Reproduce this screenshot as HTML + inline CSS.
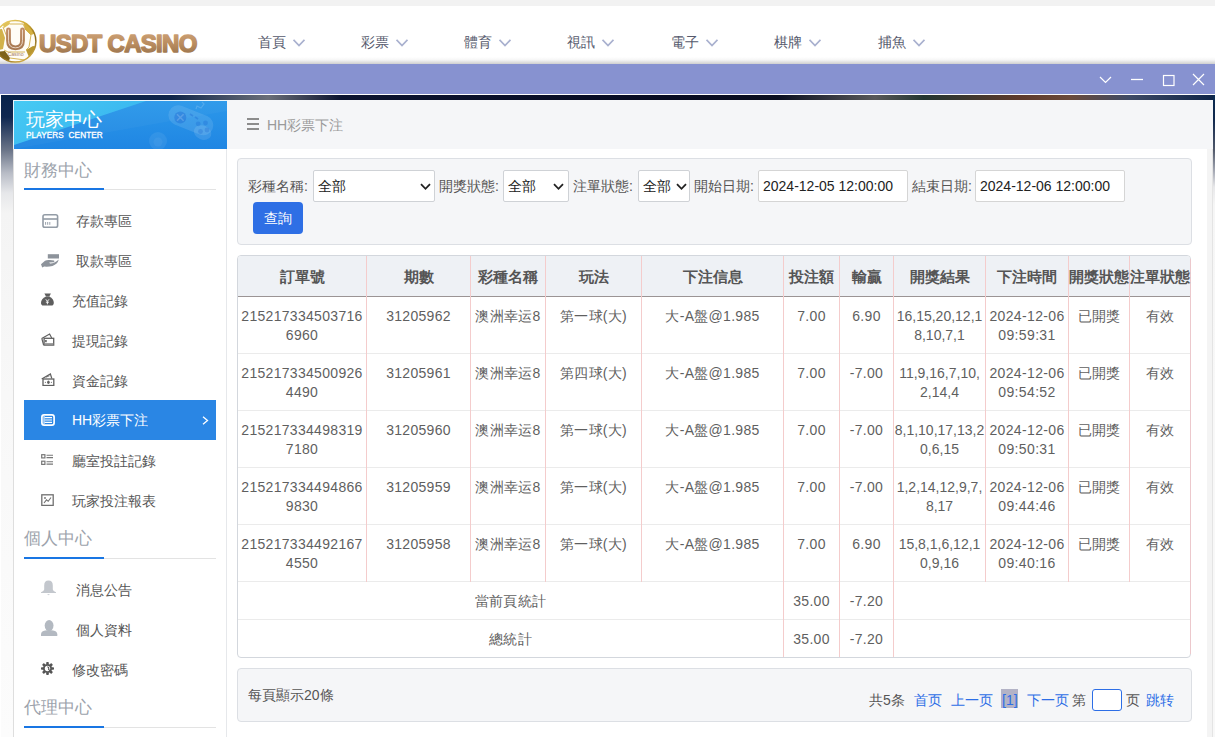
<!DOCTYPE html><html><head><meta charset="utf-8"><title>HH彩票下注</title><style>
*{margin:0;padding:0;box-sizing:border-box}
html,body{width:1215px;height:737px;overflow:hidden;background:#fff;font-family:"Liberation Sans",sans-serif;}
.a{position:absolute}
.nav{position:absolute;top:33px;font-size:14px;line-height:18px;color:#565a6d;white-space:nowrap}
.nav i{display:inline-block;position:absolute;top:5px;width:12px;height:8px}
.st{position:absolute;left:24px;font-size:17px;line-height:20px;color:#9ca3ac;white-space:nowrap}
.ul{position:absolute;left:24px;width:192px;height:1px;background:#e3e3e3}
.ub{position:absolute;left:24px;width:80px;height:2px;background:#1976e3}
.it{position:absolute;font-size:14px;line-height:18px;color:#555;white-space:nowrap}
.ic{position:absolute}
.lbl{position:absolute;top:177px;font-size:14px;line-height:18px;color:#555;white-space:nowrap}
.sel{position:absolute;top:170px;height:32px;background:#fff;border:1px solid #cfd2d6;border-radius:2px;font-size:14px;line-height:18px;color:#222;padding:6px 0 0 4px;white-space:nowrap}
.sel svg{position:absolute;top:12px}
.td{position:absolute;text-align:center;font-size:14px;line-height:19px;color:#5f5f5f;white-space:nowrap;letter-spacing:0.3px}
.th{position:absolute;text-align:center;font-size:15px;line-height:18px;color:#555;font-weight:bold;white-space:nowrap}
.vl{position:absolute;width:1px;background:#f4cccc}
.hl{position:absolute;height:1px;background:#ebebeb}
.pg{position:absolute;top:691px;font-size:14px;line-height:18px;white-space:nowrap}
.bl{color:#2d6ee6}
</style></head><body>
<div class="a" style="left:0;top:0;width:1215px;height:6px;background:#f2f2f2"></div>
<div class="a" style="left:0;top:57px;width:1215px;height:7px;background:linear-gradient(#fff,#f6f6f6 40%,#cfcfcf)"></div>
<svg class="a" style="left:0;top:0" width="205" height="66" viewBox="0 0 205 66">
<defs>
<linearGradient id="gold" x1="0" y1="0" x2="0.6" y2="1"><stop offset="0" stop-color="#f0d878"/><stop offset=".4" stop-color="#cfa935"/><stop offset=".75" stop-color="#8a6a1a"/><stop offset="1" stop-color="#c9a440"/></linearGradient>
<linearGradient id="brz" x1="0" y1="0" x2="0" y2="1"><stop offset="0" stop-color="#d2a67a"/><stop offset=".55" stop-color="#b88b5e"/><stop offset="1" stop-color="#95704a"/></linearGradient>
<linearGradient id="brzU" x1="0" y1="0" x2="0" y2="1"><stop offset="0" stop-color="#c08c64"/><stop offset="1" stop-color="#a87a52"/></linearGradient>
<clipPath id="ball"><circle cx="15.2" cy="41.3" r="21"/></clipPath>
</defs>
<circle cx="15.2" cy="41.3" r="21" fill="#fffdf6"/>
<g clip-path="url(#ball)">
<path d="M23 21 L34 24 L37 33 L31 35 L25 29Z" fill="#d4b040"/>
<path d="M-6 30 L2 29 L5 38 L3 49 L-6 51Z" fill="#d2b24a"/>
<path d="M-4 52 L5 51 L10 58 L7 66 L-4 66Z" fill="#7e6218"/>
<path d="M26 50 L33 46 L38 47 L36 58 L29 57Z" fill="#b8962e"/>
<path d="M2 22 L9 19 L10 24 L4 28Z" fill="#e0c25a"/>
<path d="M10 24 L23 24 L26 30 M25 29 L31 35 L29 47 L26 50 M4 50 L8 52 L25 52 M7 37 L3 27 M10 58 L25 60 L29 57" fill="none" stroke="#d0ad45" stroke-width="0.9"/>
</g>
<circle cx="15.2" cy="41.3" r="20.7" fill="none" stroke="url(#gold)" stroke-width="1.5"/>
<path d="M8.5 30 V40.5 Q8.5 47.8 15.5 47.8 Q22.5 47.8 22.5 40.5 V30" fill="none" stroke="url(#brzU)" stroke-width="4.8" stroke-linecap="round"/>
<path d="M8.5 30 V40.5 Q8.5 47.8 15.5 47.8 Q22.5 47.8 22.5 40.5 V30" fill="none" stroke="#f6e9dc" stroke-width="0.8" stroke-linecap="round"/>
<text x="15.5" y="56" font-size="5.2" text-anchor="middle" fill="#a88060" font-family="Liberation Sans">Casino</text>
<text x="39" y="51.6" font-family="Liberation Sans" font-weight="bold" font-size="24" letter-spacing="-0.7" fill="url(#brz)" stroke="url(#brz)" stroke-width="1.5" stroke-linejoin="round">USDT CASINO</text>
</svg>
<div class="nav" style="left:258px">首頁<svg style="position:absolute;left:35px;top:6px" width="12" height="8" viewBox="0 0 12 8"><path d="M0.5 0.8 L6 6.5 L11.5 0.8" fill="none" stroke="#a9b1cf" stroke-width="1.8"/></svg></div>
<div class="nav" style="left:361px">彩票<svg style="position:absolute;left:35px;top:6px" width="12" height="8" viewBox="0 0 12 8"><path d="M0.5 0.8 L6 6.5 L11.5 0.8" fill="none" stroke="#a9b1cf" stroke-width="1.8"/></svg></div>
<div class="nav" style="left:464px">體育<svg style="position:absolute;left:35px;top:6px" width="12" height="8" viewBox="0 0 12 8"><path d="M0.5 0.8 L6 6.5 L11.5 0.8" fill="none" stroke="#a9b1cf" stroke-width="1.8"/></svg></div>
<div class="nav" style="left:567px">視訊<svg style="position:absolute;left:35px;top:6px" width="12" height="8" viewBox="0 0 12 8"><path d="M0.5 0.8 L6 6.5 L11.5 0.8" fill="none" stroke="#a9b1cf" stroke-width="1.8"/></svg></div>
<div class="nav" style="left:671px">電子<svg style="position:absolute;left:35px;top:6px" width="12" height="8" viewBox="0 0 12 8"><path d="M0.5 0.8 L6 6.5 L11.5 0.8" fill="none" stroke="#a9b1cf" stroke-width="1.8"/></svg></div>
<div class="nav" style="left:774px">棋牌<svg style="position:absolute;left:35px;top:6px" width="12" height="8" viewBox="0 0 12 8"><path d="M0.5 0.8 L6 6.5 L11.5 0.8" fill="none" stroke="#a9b1cf" stroke-width="1.8"/></svg></div>
<div class="nav" style="left:878px">捕魚<svg style="position:absolute;left:35px;top:6px" width="12" height="8" viewBox="0 0 12 8"><path d="M0.5 0.8 L6 6.5 L11.5 0.8" fill="none" stroke="#a9b1cf" stroke-width="1.8"/></svg></div>
<div class="a" style="left:0;top:64px;width:1215px;height:30px;background:#8792d0"></div>
<svg class="a" style="left:1090px;top:64px" width="125" height="30" viewBox="0 0 125 30">
<path d="M10 13 L15.5 18.5 L21 13" fill="none" stroke="#fff" stroke-width="1.2"/>
<path d="M41 15.5 H53" stroke="#fff" stroke-width="1.3"/>
<rect x="73.5" y="11.5" width="10.5" height="10" fill="none" stroke="#fff" stroke-width="1.2"/>
<path d="M103 10 L114 21 M114 10 L103 21" stroke="#fff" stroke-width="1.2"/>
</svg>
<div class="a" style="left:0;top:94px;width:1215px;height:1px;background:#fff"></div>
<div class="a" style="left:1px;top:95px;width:1214px;height:5px;background:linear-gradient(90deg,#08224a 0%,#10264a 14%,#6a6e78 22%,#0c1430 28%,#080c22 55%,#0b0f20 64%,#58585a 72%,#243632 76%,#5e3a2c 84%,#6a4a3a 88%,#3e4a66 93%,#0e2448 100%)"></div>
<div class="a" style="left:1px;top:95px;width:12px;height:642px;background:linear-gradient(#08224a 0px,#0f2750 22px,#6a7488 55px,#b8bcc6 78px,#e6e7ea 98px,#f4f4f4 118px,#f8f8f8 300px,#fcfcfc 100%)"></div>
<div class="a" style="left:1213px;top:95px;width:2px;height:642px;background:linear-gradient(#0a2a50 0px,#12294e 25px,#50586a 55px,#a0a4b0 75px,#e8e8ea 92px,#f6f6f6 110px,#f8f8f8 300px)"></div>
<div class="a" style="left:13px;top:100px;width:214px;height:637px;background:#fff;border-left:1px solid #dedede;border-right:1px solid #e6e8eb"></div>
<div class="a" style="left:13px;top:100px;width:214px;height:49px;overflow:hidden;background:linear-gradient(#2b98ea,#2086e3);border-top:1px solid #e8f4fb;border-left:1px solid #e8f4fb">
<div class="a" style="left:0;top:0;width:213px;height:48px;clip-path:polygon(0 0,132px 0,0 44px);background:linear-gradient(150deg,#46caf3 0%,#3cb9f0 45%,#30a2ec 100%)"></div><div class="a" style="left:0;top:0;width:213px;height:48px;clip-path:polygon(132px 0,213px 0,213px 10px,0 48px,0 44px);background:rgba(255,255,255,0.03)"></div>
<svg class="a" style="left:0;top:0" width="213" height="48" viewBox="0 0 213 48"><g transform="translate(-14,-101)">
<g transform="rotate(22 190 121)" fill="rgba(255,255,255,0.11)"><rect x="167" y="110" width="47" height="20" rx="10"/><ellipse cx="206" cy="127" rx="9" ry="7"/></g>
<circle cx="180.3" cy="117.5" r="6" fill="rgba(10,80,200,0.28)"/>
<path d="M177 114.2 L183.6 120.8 M183.6 114.2 L177 120.8" stroke="rgba(255,255,255,0.18)" stroke-width="1.6"/>
<path d="M190 114 L193 116 M195 117 L198 119" stroke="rgba(10,80,200,0.25)" stroke-width="1.6"/>
<g fill="rgba(10,80,200,0.22)"><circle cx="198.2" cy="123.8" r="2.4"/><circle cx="205.5" cy="123" r="2.4"/><circle cx="200.5" cy="131.5" r="2.4"/><circle cx="207" cy="130" r="2.4"/></g>
<path d="M196 109 L197 106 L201 108 L204 104 L202 102" fill="none" stroke="rgba(255,255,255,0.16)" stroke-width="1.2"/>
<circle cx="158" cy="141" r="9" fill="rgba(255,255,255,0.07)"/><circle cx="158" cy="142" r="4.5" fill="rgba(255,255,255,0.05)"/>
</g></svg>
<div class="a" style="left:12px;top:9px;font-size:19px;line-height:20px;color:#fff;white-space:nowrap">玩家中心</div>
<div class="a" style="left:12px;top:30px;font-size:8.2px;line-height:9px;color:#fff;white-space:nowrap;letter-spacing:0.1px;-webkit-text-stroke:0.3px #fff">PLAYERS&nbsp; CENTER</div>
</div>
<div class="st" style="top:161px">財務中心</div>
<div class="ul" style="top:189px"></div>
<div class="ub" style="top:188px"></div>
<div class="it" style="left:76px;top:212px">存款專區</div>
<div class="ic" style="left:42px;top:213px;line-height:0"><svg width="17" height="16" viewBox="0 0 17 16"><rect x="1" y="1.8" width="14.6" height="12.4" rx="1.8" fill="none" stroke="#939ca6" stroke-width="1.6"/><path d="M1 6H15.6" stroke="#939ca6" stroke-width="1.6"/><path d="M3.6 9V11.8M5.7 9V11.8M7.8 9V11.8" stroke="#939ca6" stroke-width="0.95"/></svg></div>
<div class="it" style="left:76px;top:252px">取款專區</div>
<div class="ic" style="left:41px;top:254px;line-height:0"><svg width="19" height="14" viewBox="0 0 19 14"><rect x="6.8" y="0.2" width="11.2" height="4.3" fill="#8d939b"/><path d="M0 10.3 L4 6.7 Q6 5.6 9 6 L13 6.5 Q14.3 7.4 12.6 8.2 L8.2 8.6 L9 9.6 Q13 9.8 17.8 5.6 Q16.6 10.2 11.5 12 Q7 13.1 3.2 12.6 L1.2 13.6Z" fill="#8d939b"/></svg></div>
<div class="it" style="left:72px;top:292px">充值記錄</div>
<div class="ic" style="left:41px;top:293px;line-height:0"><svg width="14" height="14" viewBox="0 0 14 14"><path d="M3.4 0.6 H9.9 L8.3 3.6 H5Z" fill="#5e5e5e"/><path d="M5 3.4 H8.3 Q12.8 5.8 12.8 9.8 Q12.8 12.6 10.4 12.6 H2.4 Q0 12.6 0 9.8 Q0 5.8 5 3.4Z" fill="#5e5e5e"/><path d="M4.8 6.3 L6.4 8.3 L8 6.3 M6.4 8.3 V11.3 M4.9 9.2H7.9" stroke="#fff" stroke-width="0.9" fill="none"/></svg></div>
<div class="it" style="left:72px;top:332px">提現記錄</div>
<div class="ic" style="left:41px;top:333px;line-height:0"><svg width="14" height="13" viewBox="0 0 14 13"><path d="M0.7 5.4 L8.6 1 L10.7 5" fill="none" stroke="#606060" stroke-width="1.2"/><rect x="3.1" y="5.3" width="9.6" height="6.8" fill="none" stroke="#606060" stroke-width="1.3"/><path d="M0.8 5.4 L2.6 12" stroke="#606060" stroke-width="1.2"/><rect x="3.4" y="10.2" width="9" height="1.6" fill="#8a8a8a"/><rect x="4" y="7" width="1.8" height="2.2" fill="#707070"/></svg></div>
<div class="it" style="left:72px;top:372px">資金記錄</div>
<div class="ic" style="left:41px;top:373px;line-height:0"><svg width="14" height="13" viewBox="0 0 14 13"><path d="M0.7 6 L9.4 1 L10.8 5.5" fill="none" stroke="#606060" stroke-width="1.2"/><path d="M5 4.2 L8.5 2.8" stroke="#606060" stroke-width="0.8"/><rect x="2" y="6" width="10.8" height="6.5" fill="none" stroke="#606060" stroke-width="1.3"/><ellipse cx="7.4" cy="9.25" rx="1.3" ry="1.8" fill="#606060"/><circle cx="4.4" cy="9.25" r="0.6" fill="#606060"/><circle cx="10.4" cy="9.25" r="0.6" fill="#606060"/></svg></div>
<div class="a" style="left:24px;top:400px;width:192px;height:40px;background:#2a86e4"></div>
<div class="it" style="left:72px;top:411px;color:#fff">HH彩票下注</div>
<svg class="a" style="left:202px;top:416px" width="7" height="9" viewBox="0 0 7 9"><path d="M1 0.8 L5.5 4.5 L1 8.2" fill="none" stroke="#fff" stroke-width="1.3"/></svg>
<div class="ic" style="left:41px;top:414px;line-height:0"><svg width="14" height="12" viewBox="0 0 14 12"><rect x="0.9" y="0.9" width="12.2" height="10.2" rx="2.2" fill="none" stroke="#fff" stroke-width="1.7"/><path d="M3.6 3.6H11M3.6 6H11M3.6 8.4H11" stroke="#fff" stroke-width="1.1"/><path d="M3 2V10" stroke="#fff" stroke-width="1"/></svg></div>
<div class="it" style="left:72px;top:452px">廳室投註記錄</div>
<div class="ic" style="left:41px;top:454px;line-height:0"><svg width="13" height="12" viewBox="0 0 13 12"><rect x="0.7" y="0.7" width="3.2" height="3.2" fill="none" stroke="#777" stroke-width="1.2"/><rect x="0.7" y="7.2" width="3.2" height="3.2" fill="none" stroke="#777" stroke-width="1.2"/><path d="M5.5 1.3H12M5.5 3.6H12M5.5 7.8H12M5.5 10.1H12" stroke="#777" stroke-width="1.1"/></svg></div>
<div class="it" style="left:72px;top:492px">玩家投注報表</div>
<div class="ic" style="left:41px;top:494px;line-height:0"><svg width="13" height="12" viewBox="0 0 13 12"><rect x="0.8" y="0.8" width="11.4" height="10.6" fill="none" stroke="#707070" stroke-width="1.3"/><path d="M3 9 L5.5 5.8 L7.2 7.3 L10 3.5" fill="none" stroke="#707070" stroke-width="1.1"/><circle cx="4" cy="4" r="0.9" fill="#707070"/></svg></div>
<div class="st" style="top:529px">個人中心</div>
<div class="ul" style="top:558px"></div>
<div class="ub" style="top:557px"></div>
<div class="it" style="left:76px;top:581px">消息公告</div>
<div class="ic" style="left:41px;top:580px;line-height:0"><svg width="16" height="16" viewBox="0 0 16 16"><path d="M7.5 0.5 Q11.8 0.5 11.8 5.5 V9.5 Q12 11 15 12.3 V13 H0 V12.3 Q3 11 3.2 9.5 V5.5 Q3.2 0.5 7.5 0.5Z" fill="#c3c7cd"/><path d="M6 14.3 H9 L7.5 15.3Z" fill="#c3c7cd"/></svg></div>
<div class="it" style="left:76px;top:621px">個人資料</div>
<div class="ic" style="left:41px;top:620px;line-height:0"><svg width="17" height="16" viewBox="0 0 17 16"><ellipse cx="8.1" cy="5.6" rx="4.4" ry="5.6" fill="#b3b9c1"/><path d="M0 16 V14.3 Q0 10.6 5.5 10.2 H10.8 Q16.3 10.6 16.3 14.3 V16Z" fill="#b3b9c1"/></svg></div>
<div class="it" style="left:72px;top:661px">修改密碼</div>
<div class="ic" style="left:41px;top:662px;line-height:0"><svg width="14" height="14" viewBox="0 0 14 14"><g transform="translate(6.5 6.5)" fill="#555"><circle r="4.6"/><g id="t"><rect x="-1.3" y="-6.5" width="2.6" height="2.6" rx="0.8"/></g><use href="#t" transform="rotate(45)"/><use href="#t" transform="rotate(90)"/><use href="#t" transform="rotate(135)"/><use href="#t" transform="rotate(180)"/><use href="#t" transform="rotate(225)"/><use href="#t" transform="rotate(270)"/><use href="#t" transform="rotate(315)"/></g><circle cx="6.5" cy="6.5" r="2.7" fill="#fff"/><path d="M6.3 4.8 Q8.3 5.2 7.6 7.3 L9.6 9.3" fill="none" stroke="#555" stroke-width="1.1"/></svg></div>
<div class="st" style="top:698px">代理中心</div>
<div class="ul" style="top:727px"></div>
<div class="ub" style="top:726px"></div>
<div class="a" style="left:227px;top:100px;width:986px;height:49px;background:#f5f6f8"></div>
<div class="a" style="left:1207px;top:149px;width:5px;height:588px;background:#f4f4f4"></div>
<div class="a" style="left:1212px;top:149px;width:1px;height:588px;background:#e4e4e4"></div>
<svg class="a" style="left:247px;top:118px" width="12" height="12" viewBox="0 0 12 12"><path d="M0 1H12M0 6H12M0 11H12" stroke="#8c8c8c" stroke-width="1.8"/></svg>
<div class="a" style="left:267px;top:116px;font-size:14px;line-height:18px;color:#9a9a9a;white-space:nowrap">HH彩票下注</div>
<div class="a" style="left:237px;top:158px;width:955px;height:87px;background:#f5f6f8;border:1px solid #dcdfe4;border-radius:4px"></div>
<div class="lbl" style="left:248px">彩種名稱:</div>
<div class="sel" style="left:313px;width:122px">全部<svg style="position:absolute;left:105.5px;top:11.5px" width="11" height="8" viewBox="0 0 11 8"><path d="M1 1.2 L5.5 5.8 L10 1.2" fill="none" stroke="#222" stroke-width="1.8"/></svg></div>
<div class="lbl" style="left:439px">開獎狀態:</div>
<div class="sel" style="left:503px;width:66px">全部<svg style="position:absolute;left:48.5px;top:11.5px" width="11" height="8" viewBox="0 0 11 8"><path d="M1 1.2 L5.5 5.8 L10 1.2" fill="none" stroke="#222" stroke-width="1.8"/></svg></div>
<div class="lbl" style="left:573px">注單狀態:</div>
<div class="sel" style="left:638px;width:52px">全部<svg style="position:absolute;left:36.5px;top:11.5px" width="11" height="8" viewBox="0 0 11 8"><path d="M1 1.2 L5.5 5.8 L10 1.2" fill="none" stroke="#222" stroke-width="1.8"/></svg></div>
<div class="lbl" style="left:694px">開始日期:</div>
<div class="sel" style="left:758px;width:150px;border-color:#d5d5d5">2024-12-05 12:00:00</div>
<div class="lbl" style="left:912px">結束日期:</div>
<div class="sel" style="left:975px;width:150px;border-color:#d5d5d5">2024-12-06 12:00:00</div>
<div class="a" style="left:253px;top:202px;width:50px;height:32px;background:#2e6fe5;border-radius:4px;color:#fff;font-size:14px;line-height:18px;text-align:center;padding-top:7px">查詢</div>
<div class="a" style="left:237px;top:255px;width:954px;height:403px;border:1px solid #d3d7dd;border-radius:4px;overflow:hidden;background:#fff"><div class="a" style="left:0;top:0;width:953px;height:40px;background:#eef1f5"></div></div>
<div class="a" style="left:238px;top:296px;width:952px;height:1px;background:#9b9494"></div>
<div class="hl" style="left:238px;top:353px;width:952px"></div>
<div class="hl" style="left:238px;top:410px;width:952px"></div>
<div class="hl" style="left:238px;top:467px;width:952px"></div>
<div class="hl" style="left:238px;top:524px;width:952px"></div>
<div class="hl" style="left:238px;top:581px;width:952px"></div>
<div class="hl" style="left:238px;top:619px;width:952px"></div>
<div class="vl" style="left:366px;top:256px;height:326px"></div>
<div class="vl" style="left:470px;top:256px;height:326px"></div>
<div class="vl" style="left:545px;top:256px;height:326px"></div>
<div class="vl" style="left:641px;top:256px;height:326px"></div>
<div class="vl" style="left:783px;top:256px;height:401px"></div>
<div class="vl" style="left:839px;top:256px;height:401px"></div>
<div class="vl" style="left:893px;top:256px;height:401px"></div>
<div class="vl" style="left:985px;top:256px;height:326px"></div>
<div class="vl" style="left:1068px;top:256px;height:326px"></div>
<div class="vl" style="left:1129px;top:256px;height:326px"></div>
<div class="vl" style="left:1190px;top:259px;height:395px;background:#ecc8cc"></div>
<div class="th" style="left:238px;top:268px;width:128px">訂單號</div>
<div class="th" style="left:367px;top:268px;width:103px">期數</div>
<div class="th" style="left:471px;top:268px;width:74px">彩種名稱</div>
<div class="th" style="left:546px;top:268px;width:95px">玩法</div>
<div class="th" style="left:642px;top:268px;width:141px">下注信息</div>
<div class="th" style="left:784px;top:268px;width:55px">投注額</div>
<div class="th" style="left:840px;top:268px;width:53px">輸贏</div>
<div class="th" style="left:894px;top:268px;width:91px">開獎結果</div>
<div class="th" style="left:986px;top:268px;width:82px">下注時間</div>
<div class="th" style="left:1069px;top:268px;width:60px">開獎狀態</div>
<div class="th" style="left:1130px;top:268px;width:60px">注單狀態</div>
<div class="td" style="left:238px;top:307px;width:128px">215217334503716<br>6960</div>
<div class="td" style="left:367px;top:307px;width:103px">31205962</div>
<div class="td" style="left:471px;top:307px;width:74px">澳洲幸运8</div>
<div class="td" style="left:546px;top:307px;width:95px">第一球(大)</div>
<div class="td" style="left:642px;top:307px;width:141px">大-A盤@1.985</div>
<div class="td" style="left:784px;top:307px;width:55px">7.00</div>
<div class="td" style="left:840px;top:307px;width:53px">6.90</div>
<div class="td" style="left:894px;top:307px;width:91px;letter-spacing:0">16,15,20,12,1<br>8,10,7,1</div>
<div class="td" style="left:986px;top:307px;width:82px;letter-spacing:0.35px">2024-12-06<br>09:59:31</div>
<div class="td" style="left:1069px;top:307px;width:60px">已開獎</div>
<div class="td" style="left:1130px;top:307px;width:60px">有效</div>
<div class="td" style="left:238px;top:364px;width:128px">215217334500926<br>4490</div>
<div class="td" style="left:367px;top:364px;width:103px">31205961</div>
<div class="td" style="left:471px;top:364px;width:74px">澳洲幸运8</div>
<div class="td" style="left:546px;top:364px;width:95px">第四球(大)</div>
<div class="td" style="left:642px;top:364px;width:141px">大-A盤@1.985</div>
<div class="td" style="left:784px;top:364px;width:55px">7.00</div>
<div class="td" style="left:840px;top:364px;width:53px">-7.00</div>
<div class="td" style="left:894px;top:364px;width:91px;letter-spacing:0">11,9,16,7,10,<br>2,14,4</div>
<div class="td" style="left:986px;top:364px;width:82px;letter-spacing:0.35px">2024-12-06<br>09:54:52</div>
<div class="td" style="left:1069px;top:364px;width:60px">已開獎</div>
<div class="td" style="left:1130px;top:364px;width:60px">有效</div>
<div class="td" style="left:238px;top:421px;width:128px">215217334498319<br>7180</div>
<div class="td" style="left:367px;top:421px;width:103px">31205960</div>
<div class="td" style="left:471px;top:421px;width:74px">澳洲幸运8</div>
<div class="td" style="left:546px;top:421px;width:95px">第一球(大)</div>
<div class="td" style="left:642px;top:421px;width:141px">大-A盤@1.985</div>
<div class="td" style="left:784px;top:421px;width:55px">7.00</div>
<div class="td" style="left:840px;top:421px;width:53px">-7.00</div>
<div class="td" style="left:894px;top:421px;width:91px;letter-spacing:0">8,1,10,17,13,2<br>0,6,15</div>
<div class="td" style="left:986px;top:421px;width:82px;letter-spacing:0.35px">2024-12-06<br>09:50:31</div>
<div class="td" style="left:1069px;top:421px;width:60px">已開獎</div>
<div class="td" style="left:1130px;top:421px;width:60px">有效</div>
<div class="td" style="left:238px;top:478px;width:128px">215217334494866<br>9830</div>
<div class="td" style="left:367px;top:478px;width:103px">31205959</div>
<div class="td" style="left:471px;top:478px;width:74px">澳洲幸运8</div>
<div class="td" style="left:546px;top:478px;width:95px">第一球(大)</div>
<div class="td" style="left:642px;top:478px;width:141px">大-A盤@1.985</div>
<div class="td" style="left:784px;top:478px;width:55px">7.00</div>
<div class="td" style="left:840px;top:478px;width:53px">-7.00</div>
<div class="td" style="left:894px;top:478px;width:91px;letter-spacing:0">1,2,14,12,9,7,<br>8,17</div>
<div class="td" style="left:986px;top:478px;width:82px;letter-spacing:0.35px">2024-12-06<br>09:44:46</div>
<div class="td" style="left:1069px;top:478px;width:60px">已開獎</div>
<div class="td" style="left:1130px;top:478px;width:60px">有效</div>
<div class="td" style="left:238px;top:535px;width:128px">215217334492167<br>4550</div>
<div class="td" style="left:367px;top:535px;width:103px">31205958</div>
<div class="td" style="left:471px;top:535px;width:74px">澳洲幸运8</div>
<div class="td" style="left:546px;top:535px;width:95px">第一球(大)</div>
<div class="td" style="left:642px;top:535px;width:141px">大-A盤@1.985</div>
<div class="td" style="left:784px;top:535px;width:55px">7.00</div>
<div class="td" style="left:840px;top:535px;width:53px">6.90</div>
<div class="td" style="left:894px;top:535px;width:91px;letter-spacing:0">15,8,1,6,12,1<br>0,9,16</div>
<div class="td" style="left:986px;top:535px;width:82px;letter-spacing:0.35px">2024-12-06<br>09:40:16</div>
<div class="td" style="left:1069px;top:535px;width:60px">已開獎</div>
<div class="td" style="left:1130px;top:535px;width:60px">有效</div>
<div class="td" style="left:238px;top:592px;width:545px">當前頁統計</div>
<div class="td" style="left:784px;top:592px;width:55px">35.00</div>
<div class="td" style="left:840px;top:592px;width:53px">-7.20</div>
<div class="td" style="left:238px;top:630px;width:545px">總統計</div>
<div class="td" style="left:784px;top:630px;width:55px">35.00</div>
<div class="td" style="left:840px;top:630px;width:53px">-7.20</div>
<div class="a" style="left:237px;top:668px;width:955px;height:54px;background:#f5f6f8;border:1px solid #dcdfe4;border-radius:4px"></div>
<div class="a" style="left:248px;top:686px;font-size:14px;line-height:18px;color:#555;white-space:nowrap">每頁顯示20條</div>
<div class="pg" style="left:869px;color:#555">共5条</div>
<div class="pg bl" style="left:914px">首页</div>
<div class="pg bl" style="left:951px">上一页</div>
<div class="a" style="left:1001px;top:689px;width:17px;height:19px;background:#b3b3c6"></div>
<div class="pg bl" style="left:1002px">[1]</div>
<div class="pg bl" style="left:1027px">下一页</div>
<div class="pg" style="left:1072px;color:#555">第</div>
<div class="a" style="left:1092px;top:689px;width:30px;height:22px;border:1px solid #2d6ee6;border-radius:3px;background:#fff"></div>
<div class="pg" style="left:1126px;color:#555">页</div>
<div class="pg bl" style="left:1146px">跳转</div>
</body></html>
